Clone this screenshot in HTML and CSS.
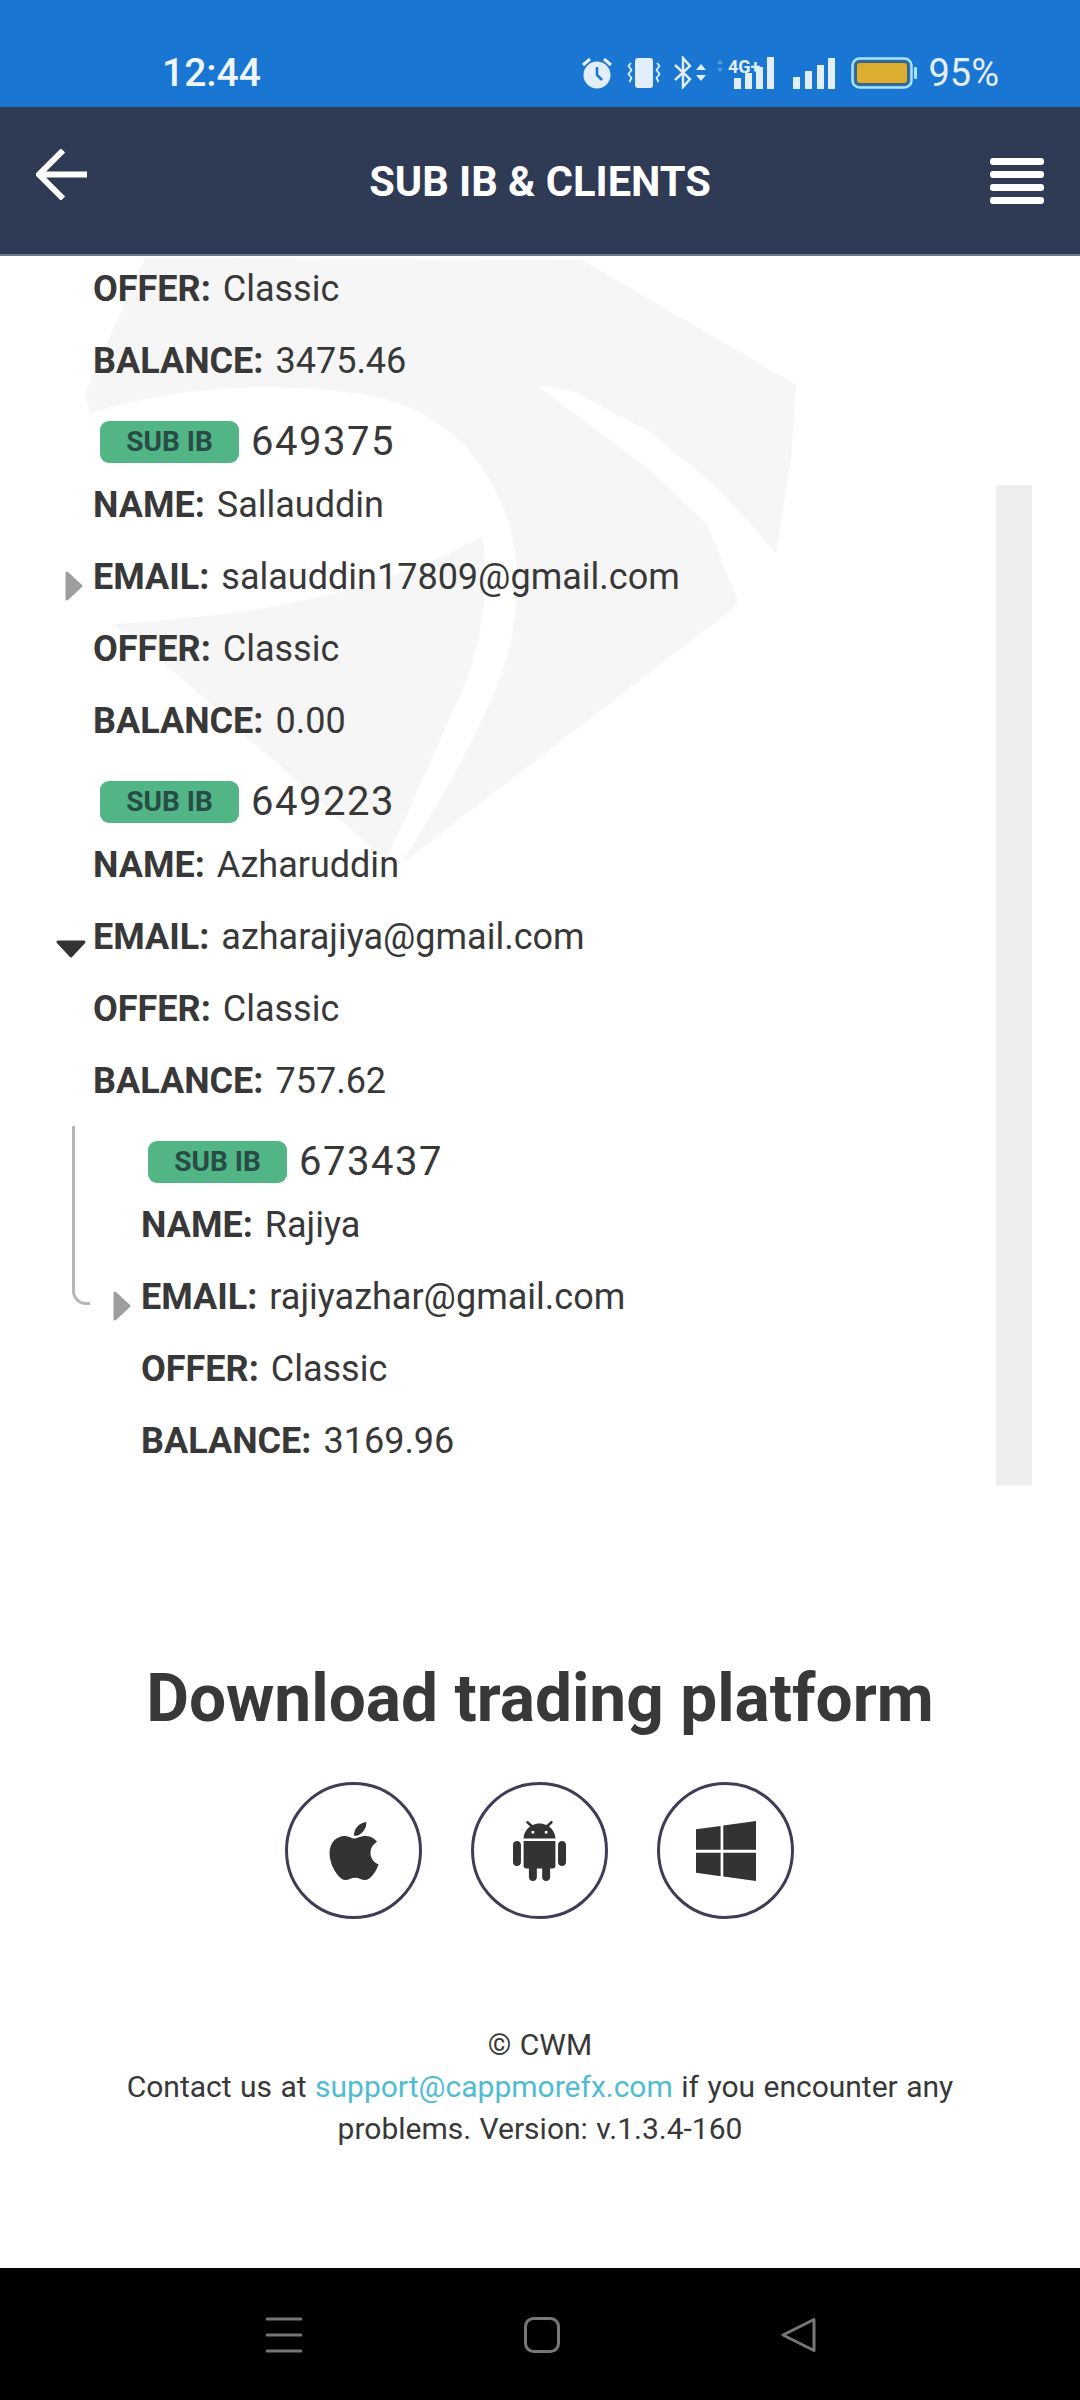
FILE: index.html
```html
<!DOCTYPE html>
<html lang="en">
<head>
  <meta charset="UTF-8" />
  <title>Sub IB &amp; Clients</title>
  <link rel="stylesheet" href="styles.css">
</head>
<body>
  <div class="statusbar">
    <span class="clock">12:44</span>
    <div class="status-icons">
      <svg class="ic-alarm" width="32" height="34" viewBox="0 0 32 34"><circle cx="16" cy="19" r="13.5" fill="#e3eefb"/><path d="M16 11v8l5 5" fill="none" stroke="#1976d2" stroke-width="2.6"/><path d="M2 9l7-6M30 9l-7-6" stroke="#e3eefb" stroke-width="3"/></svg>
      <svg class="ic-vibrate" width="34" height="32" viewBox="0 0 34 32"><rect x="8" y="1" width="18" height="30" rx="3" fill="#e3eefb"/><path d="M4 6l-2.500 3 3 4-3 4 3 4-2 4M30 6l2.500 3-3 4 3 4-3 4 2 4" fill="none" stroke="#e3eefb" stroke-width="1.800"/></svg>
      <svg class="ic-bt" width="34" height="33" viewBox="0 0 34 33"><path d="M1 9l15 14-7 8V2l7 8L1 24" fill="none" stroke="#e3eefb" stroke-width="2.400"/><path d="M22 14l5-6 5 6zM22 19l5 6 5-6z" fill="#e3eefb"/></svg>
      <svg class="ic-net" width="62" height="34" viewBox="0 0 62 34"><path d="M1 8l3-4 3 4zM1 12l3 4 3-4z" fill="#5a9be0"/><text x="12" y="17" class="net-label">4G+</text><rect x="18" y="22" width="7" height="11" fill="#e3eefb"/><rect x="29" y="17" width="7" height="16" fill="#e3eefb"/><rect x="40" y="11" width="7" height="22" fill="#e3eefb"/><rect x="51" y="1" width="7" height="32" fill="#e3eefb"/></svg>
      <svg class="ic-signal" width="42" height="32" viewBox="0 0 42 32"><rect x="0" y="20" width="7" height="12" fill="#e3eefb"/><rect x="12" y="14" width="7" height="18" fill="#e3eefb"/><rect x="24" y="8" width="7" height="24" fill="#e3eefb"/><rect x="35" y="1" width="7" height="31" fill="#e3eefb"/></svg>
      <svg class="ic-battery" width="67" height="32" viewBox="0 0 67 32"><rect x="1.500" y="1.500" width="59" height="29" rx="7" fill="none" stroke="#a9e4fb" stroke-width="2.500"/><rect x="5" y="5" width="52" height="22" rx="4" fill="#dcae2f" stroke="#4a6275" stroke-width="2"/><rect x="63" y="10" width="3" height="12" rx="1" fill="#a9e4fb"/></svg>
      <span class="percent">95%</span>
    </div>
  </div>

  <header class="topbar">
    <svg class="back" width="51" height="51" viewBox="0 0 51 51"><path d="M27 1.500L3 25.500l24 24M3 25.500h48" fill="none" stroke="#fff" stroke-width="6"/></svg>
    <h1>SUB IB &amp; CLIENTS</h1>
    <div class="burger"><i></i><i></i><i></i><i></i></div>
  </header>

  <main class="content">
    <div class="list-area">
      <svg class="watermark" width="820" height="640" viewBox="0 0 820 640">
        <path d="M145 2L582 4 796 129 791 204 776 297 720 234 650 176 575 136 537 129 590 169 650 214 707 268 739 348 400 609C450 530 495 450 510 390C525 320 515 265 490 225C465 180 420 148 368 139C280 125 170 130 90 158L85 137z"/>
        <path d="M110 369L209 360C300 350 400 325 483 280C490 340 480 400 455 450C430 505 410 555 385 604L135 381z"/>
      </svg>
      <div class="scrollbar"></div>

      <ul class="tree">
        <li class="node">
          <div class="row"><b>OFFER:</b> Classic</div>
          <div class="row"><b>BALANCE:</b> 3475.46</div>
        </li>
        <li class="node">
          <div class="head"><span class="badge">SUB IB</span><span class="acc">649375</span></div>
          <div class="row"><b>NAME:</b> Sallauddin</div>
          <div class="row"><svg class="toggle closed" width="18" height="30" viewBox="0 0 18 30"><path d="M2 2L16 15 2 28z"/></svg><b>EMAIL:</b> salauddin17809@gmail.com</div>
          <div class="row"><b>OFFER:</b> Classic</div>
          <div class="row"><b>BALANCE:</b> 0.00</div>
        </li>
        <li class="node">
          <div class="head"><span class="badge">SUB IB</span><span class="acc">649223</span></div>
          <div class="row"><b>NAME:</b> Azharuddin</div>
          <div class="row"><svg class="toggle open" width="30" height="18" viewBox="0 0 30 18"><path d="M2 2h26L15 16z"/></svg><b>EMAIL:</b> azharajiya@gmail.com</div>
          <div class="row"><b>OFFER:</b> Classic</div>
          <div class="row"><b>BALANCE:</b> 757.62</div>
          <ul class="tree child">
            <li class="node">
              <span class="branch"></span>
              <div class="head"><span class="badge">SUB IB</span><span class="acc">673437</span></div>
              <div class="row"><b>NAME:</b> Rajiya</div>
              <div class="row"><svg class="toggle closed" width="18" height="30" viewBox="0 0 18 30"><path d="M2 2L16 15 2 28z"/></svg><b>EMAIL:</b> rajiyazhar@gmail.com</div>
              <div class="row"><b>OFFER:</b> Classic</div>
              <div class="row"><b>BALANCE:</b> 3169.96</div>
            </li>
          </ul>
        </li>
      </ul>
    </div>

    <section class="download">
      <h2>Download trading platform</h2>
      <div class="platforms">
        <a class="platform">
          <svg width="50" height="60" viewBox="0 24 384 464" preserveAspectRatio="none"><path d="M318.700 268.700c-.2-36.700 16.400-64.400 50-84.800-18.800-26.900-47.200-41.700-84.700-44.600-35.500-2.800-74.300 20.700-88.500 20.700-15 0-49.400-19.700-76.400-19.700C63.300 141.200 4 184.800 4 273.500q0 39.300 14.400 81.200c12.800 36.700 59 126.700 107.200 125.200 25.200-.6 43-17.900 75.800-17.900 31.800 0 48.300 17.900 76.400 17.900 48.600-.7 90.400-82.500 102.600-119.300-65.200-30.700-61.700-90-61.700-91.900zm-56.600-164.200c27.300-32.400 24.800-61.900 24-72.500-24.100 1.400-52 16.400-67.900 34.900-17.500 19.800-27.800 44.300-25.600 71.900 26.100 2 49.900-11.400 69.500-34.300z"/></svg>
        </a>
        <a class="platform">
          <svg width="53" height="60" viewBox="2 0 20 24" preserveAspectRatio="none"><path d="M6 18c0 .55.45 1 1 1h1v3.500c0 .83.67 1.500 1.500 1.500s1.500-.67 1.500-1.500V19h2v3.500c0 .83.67 1.500 1.500 1.500s1.500-.67 1.500-1.500V19h1c.55 0 1-.45 1-1V8H6v10zM3.500 8C2.670 8 2 8.670 2 9.500v7c0 .83.67 1.500 1.500 1.500S5 17.330 5 16.500v-7C5 8.670 4.330 8 3.500 8zm17 0c-.83 0-1.500.67-1.500 1.500v7c0 .83.67 1.500 1.500 1.500s1.500-.67 1.500-1.500v-7c0-.83-.67-1.500-1.500-1.500zm-4.970-5.840l1.300-1.300c.2-.2.2-.51 0-.71-.2-.2-.51-.2-.71 0l-1.480 1.480C13.850 1.230 12.950 1 12 1c-.96 0-1.860.23-2.660.63L7.850.15c-.2-.2-.51-.2-.71 0-.2.2-.2.51 0 .71l1.310 1.310C6.970 3.260 6 5.010 6 7h12c0-1.990-.97-3.750-2.470-4.840zM10 5H9V4h1v1zm5 0h-1V4h1v1z"/></svg>
        </a>
        <a class="platform">
          <svg width="60" height="60" viewBox="0 32 448 448" preserveAspectRatio="none"><path d="M0 93.700l183.600-25.300v177.400H0V93.700zm0 324.600l183.600 25.300V268.400H0v149.900zm203.800 28L448 480V268.400H203.800v177.900zm0-380.600v180.100H448V32L203.800 65.700z"/></svg>
        </a>
      </div>
    </section>

    <footer class="legal">
      <p>© CWM</p>
      <p>Contact us at <a href="#">support@cappmorefx.com</a> if you encounter any problems. Version: v.1.3.4-160</p>
    </footer>
  </main>

  <nav class="navbar">
    <svg width="36" height="36" viewBox="0 0 36 36"><path d="M0 2h36M0 18h36M0 34h36" stroke="#777" stroke-width="3"/></svg>
    <svg width="36" height="36" viewBox="0 0 36 36"><rect x="1.500" y="1.500" width="33" height="33" rx="8" fill="none" stroke="#777" stroke-width="3"/></svg>
    <svg width="36" height="36" viewBox="0 0 36 36"><path d="M33 2.500L2 18l31 15.500z" fill="none" stroke="#777" stroke-width="3" stroke-linejoin="round"/></svg>
  </nav>
</body>
</html>
```

FILE: styles.css
```css
* {
  box-sizing: border-box;
}
html, body {
  margin: 0;
  height: 2400px;
}
body {
  display: flex;
  flex-direction: column;
  overflow: hidden;
  font-family: Roboto, 'Noto Sans', sans-serif;
  color: #383838;
  background-color: #fff;
}

/* phone status bar */
.statusbar {
  height: 107px;
  flex: none;
  background-color: #1976d2;
  display: flex;
  justify-content: space-between;
  align-items: center;
  padding: 38px 81px 0 162px;
  color: #eef5fd;
}
.clock {
  font-size: 39px;
  font-weight: 500;
}
.status-icons {
  display: flex;
  align-items: center;
}
.status-icons svg {
  display: block;
}
.ic-vibrate { margin-left: 14px; }
.ic-bt { margin-left: 13px; }
.ic-net { margin-left: 8px; }
.ic-signal { margin-left: 15px; }
.ic-battery { margin-left: 16px; }
.net-label {
  font-size: 18px;
  font-weight: 700;
  fill: #e3eefb;
}
.percent {
  font-size: 38px;
  margin-left: 10px;
  color: #e3eefb;
}

/* app header */
.topbar {
  height: 149px;
  flex: none;
  display: grid;
  grid-template-columns: 1fr auto 1fr;
  align-items: center;
  padding: 0 36px 0;
  background-color: #2f3a55;
  border-bottom: 2px solid #6e7689;
}
.topbar h1 {
  margin: 2px 0 0;
  font-size: 41.6px;
  font-weight: 700;
  color: #fff;
}
.back {
  margin-bottom: 13px;
}
.burger {
  justify-self: end;
  width: 54px;
  display: flex;
  flex-direction: column;
  gap: 6px;
}
.burger i {
  height: 7px;
  border-radius: 3px;
  background-color: #fff;
}

.content {
  flex: 1;
  display: flex;
  flex-direction: column;
}

/* client tree */
.list-area {
  position: relative;
  height: 1234px;
  overflow: hidden;
  flex: none;
}
.watermark {
  position: absolute;
  left: 0;
  top: 0;
  fill: #f6f6f6;
}
.scrollbar {
  position: absolute;
  left: 996px;
  top: 229px;
  width: 36px;
  height: 1000px;
  background-color: #eee;
}
.tree {
  position: relative;
  list-style: none;
  margin: -4px 0 0;
  padding: 0 0 0 93px;
}
.tree.child {
  margin: 0;
  padding-left: 48px;
}
.node {
  position: relative;
}
.head {
  height: 72px;
  padding-top: 25px;
  display: flex;
  align-items: flex-start;
}
.badge {
  width: 139px;
  height: 42px;
  margin-left: 7px;
  border-radius: 9px;
  background-color: #52b586;
  color: #274b45;
  font-size: 28px;
  font-weight: 700;
  line-height: 42px;
  text-align: center;
}
.acc {
  margin-left: 12px;
  font-size: 40px;
  line-height: 42px;
  letter-spacing: 1.5px;
}
.row {
  position: relative;
  height: 72px;
  font-size: 36px;
  line-height: 74px;
  white-space: nowrap;
}
.row b {
  font-weight: 700;
  margin-right: 3px;
}
.toggle {
  position: absolute;
}
.toggle path {
  stroke-width: 3px;
  stroke-linejoin: round;
}
.toggle.closed {
  left: -28px;
  top: 31px;
  fill: #9e9e9e;
  stroke: #9e9e9e;
}
.toggle.open {
  left: -37px;
  top: 40px;
  fill: #333;
  stroke: #333;
}
.branch {
  position: absolute;
  left: -69px;
  top: 10px;
  width: 18px;
  height: 179px;
  border-left: 3px solid #b5b5b5;
  border-bottom: 3px solid #b5b5b5;
  border-bottom-left-radius: 14px;
}

/* download links */
.download {
  padding-top: 164px;
  text-align: center;
}
.download h2 {
  margin: 0;
  font-size: 65.8px;
  line-height: 90px;
  font-weight: 700;
}
.platforms {
  display: flex;
  justify-content: center;
  gap: 49px;
  margin-top: 38px;
  padding-right: 1px;
}
.platform {
  width: 137px;
  height: 137px;
  display: flex;
  align-items: center;
  justify-content: center;
  border: 3.5px solid #3d3d55;
  border-radius: 50%;
}
.platform svg {
  fill: #333;
}

.legal {
  margin: 105px auto 0;
  width: 860px;
  font-size: 30px;
  word-spacing: 1px;
  line-height: 42px;
  text-align: center;
}
.legal p {
  margin: 0;
}
.legal a {
  color: #4fbcd4;
  text-decoration: none;
}

/* android nav bar */
.navbar {
  height: 132px;
  flex: none;
  background-color: #000;
  display: flex;
  justify-content: space-between;
  align-items: flex-start;
  padding: 49px 263px 0 266px;
}
```
